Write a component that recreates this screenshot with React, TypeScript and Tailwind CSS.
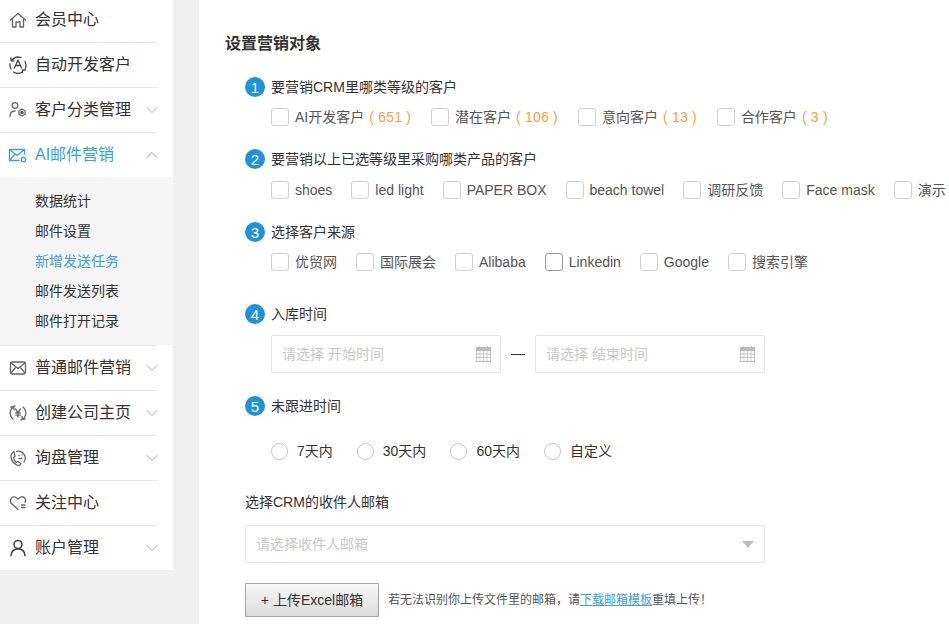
import { ChevronDown, ChevronUp } from 'lucide-react'
import type { ReactNode } from 'react'

const Ic = ({ children, color = '#666' }: { children: ReactNode; color?: string }) => (
  <svg width="20" height="20" viewBox="0 0 20 20" fill="none" stroke={color} strokeWidth="1.3" strokeLinecap="round" strokeLinejoin="round">
    {children}
  </svg>
)

const icons: Record<string, ReactNode> = {
  home: <Ic><path d="M2.5 10 10 3.5 17.5 10M4.5 9v8h3.5v-5h4v5h3.5V9" /></Ic>,
  auto: (
    <Ic color="#444">
      <path d="M3.8 5.5A8 8 0 0 1 13 2.6M17 6.5a8 8 0 0 1 .3 7M14.5 17a8 8 0 0 1-9 0M3 14a8 8 0 0 1-1-5" />
      <path d="M6.500 13 10 5l3.500 8M7.800 10.500h4.400" />
      <path d="M3 2.800v3h3M14.500 17.500V15h3" />
    </Ic>
  ),
  users: (
    <Ic>
      <circle cx="7" cy="5.500" r="2.800" />
      <path d="M2 16.500c0-3.500 2-5.500 5-5.500" />
      <path d="m14 9 3 1.700v3.500L14 16l-3-1.800v-3.500z" />
      <circle cx="14" cy="12.500" r="1.200" fill="#666" />
    </Ic>
  ),
  aiMail: (
    <Ic color="#3b9fe0">
      <path d="M16.500 9V4.500h-15v11H11" />
      <path d="m1.500 4.500 7.500 6 7.500-6M1.500 15.500l5-6" />
      <circle cx="15.500" cy="14.500" r="2.200" />
    </Ic>
  ),
  mail: (
    <Ic>
      <rect x="2.500" y="4" width="15" height="12" rx="1.500" />
      <path d="m3 5 7 5.500L17 5M3 15l5-6M17 15l-5-6" />
    </Ic>
  ),
  company: (
    <Ic>
      <path d="M7 2.800A7.800 7.800 0 0 0 5 16M13 17.200A7.800 7.800 0 0 0 15 4" />
      <path d="M2.800 4H5.500l.5 2.500M17.200 16h-2.700l-.5-2.500" />
      <path d="m7.500 6 2.500 3.500L12.500 6M10 9.500V14M7.800 10h4.400M7.800 12.200h4.400" />
    </Ic>
  ),
  inquiry: (
    <Ic>
      <path d="M6 3.500c-5 3-3.500 10.500 3 13.500 2 1 3.500.2 3.800-1.500l-3-2-1.500 1c-1.500-1-2.500-3-2.800-5l1.500-1z" />
      <path d="M8.500 3.300A7 7 0 0 1 16 14" />
      <path d="M11 7.500h.1M14 7h.1M11 10.500c1 .5 2 .3 3-.5" />
    </Ic>
  ),
  heart: (
    <Ic>
      <path d="M10 16.500 3.500 10.500C1 7.500 3 3.500 6.500 3.800 8 4 9.300 5 10 6.300 10.700 5 12 4 13.500 3.800 16.500 3.500 18.500 6.500 17 9.500" />
      <path d="M13.500 12h3.500M13.500 14.500h3.500" />
    </Ic>
  ),
  account: (
    <Ic color="#444">
      <circle cx="10" cy="6.500" r="4" strokeWidth="1.600" />
      <path d="M3 17.500c.3-4 3-6.500 7-6.500s6.700 2.500 7 6.500" strokeWidth="1.600" />
    </Ic>
  ),
}

function NavItem({ icon, label, arrow, last }: { icon: string; label: string; arrow?: boolean; last?: boolean }) {
  return (
    <div className={`mr-4 flex items-center ${last ? 'h-[44px]' : 'h-[45px] border-b border-[#e6e6e6]'}`}>
      <div className="ml-[8px] flex w-[27px] shrink-0">{icons[icon]}</div>
      <span className="flex-1 text-base text-[#333]">{label}</span>
      {arrow && <ChevronDown size={20} strokeWidth={1.2} className="-mr-[5px] text-[#aaa]" />}
    </div>
  )
}

function Step({ n, children }: { n: number; children: ReactNode }) {
  return (
    <div className="flex h-5 items-center">
      <span className="flex h-5 w-5 items-center justify-center rounded-full bg-[#1f93d9] text-[15px] leading-none text-white">{n}</span>
      <span className="ml-[6px] text-sm text-[#333]">{children}</span>
    </div>
  )
}

function Check({ label, count, dark }: { label: string; count?: number; dark?: boolean }) {
  return (
    <label className="flex shrink-0 items-center">
      <span className={`h-[18px] w-[18px] shrink-0 rounded-[3px] border ${dark ? 'border-[#999]' : 'border-[#d0d0d0]'} bg-white`} />
      <span className="ml-[6px] text-sm whitespace-nowrap text-[#555]">{label}</span>
      {count !== undefined && <span className="ml-[5px] text-sm tracking-[0.2px] whitespace-nowrap text-[#ff9f40]">( {count} )</span>}
    </label>
  )
}

function Radio({ label }: { label: string }) {
  return (
    <label className="flex items-center">
      <span className="h-[17px] w-[17px] rounded-full border border-[#c4c4c4] bg-white" />
      <span className="ml-[9px] text-sm text-[#333]">{label}</span>
    </label>
  )
}

function CalendarIcon() {
  return (
    <svg width="15" height="16" viewBox="0 0 15 16" fill="none" stroke="#bbb" strokeWidth="1">
      <path d="M3.500 0v3M11.500 0v3" />
      <rect x="0" y="1.500" width="15" height="3" fill="#bbb" />
      <rect x=".5" y="4.500" width="14" height="11" />
      <path d="M0 8h15M0 11.500h15M4 4.500v11M7.500 4.500v11M11 4.500v11" strokeWidth=".8" />
    </svg>
  )
}

function DateInput({ placeholder }: { placeholder: string }) {
  return (
    <div className="flex h-[38px] w-[230px] items-center justify-between rounded-[2px] border border-[#e6e6e6] bg-white pr-[9px] pl-[10px]">
      <span className="text-sm text-[#c8c8c8]">{placeholder}</span>
      <CalendarIcon />
    </div>
  )
}

const sub = ['数据统计', '邮件设置', '新增发送任务', '邮件发送列表', '邮件打开记录']

export default function App() {
  return (
    <div className="flex h-[624px] overflow-hidden bg-[#f0f0f0] font-['Liberation_Sans','Noto_Sans_CJK_SC',sans-serif]">
      <aside className="-mt-[2px] w-[173px] shrink-0 self-start bg-white">
        <NavItem icon="home" label="会员中心" />
        <NavItem icon="auto" label="自动开发客户" />
        <NavItem icon="users" label="客户分类管理" arrow />
        <div className="mr-4 flex h-[44px] items-center">
          <div className="ml-[8px] flex w-[27px] shrink-0">{icons.aiMail}</div>
          <span className="flex-1 text-base text-[#3b9fe0]">AI邮件营销</span>
          <ChevronUp size={20} strokeWidth={1.2} className="-mr-[5px] text-[#999]" />
        </div>
        <div className="h-[168px] bg-[#f5f5f5] pt-[9px] pl-[35px]">
          {sub.map(s => (
            <div key={s} className={`h-[30px] text-sm leading-[30px] ${s === '新增发送任务' ? 'text-[#3b9fe0]' : 'text-[#333]'}`}>{s}</div>
          ))}
        </div>
        <div className="mr-4 border-t border-[#e6e6e6]" />
        <NavItem icon="mail" label="普通邮件营销" arrow />
        <NavItem icon="company" label="创建公司主页" arrow />
        <NavItem icon="inquiry" label="询盘管理" arrow />
        <NavItem icon="heart" label="关注中心" />
        <NavItem icon="account" label="账户管理" arrow last />
      </aside>

      <main className="ml-[26px] flex-1 overflow-hidden bg-white pt-[34px] pl-[26px]">
        <h1 className="text-base leading-5 font-bold text-[#333]">设置营销对象</h1>

        <div className="mt-[23px] ml-[20px]">
          <Step n={1}>要营销CRM里哪类等级的客户</Step>
          <div className="mt-[11px] ml-[26px] flex h-[18px] items-center gap-5">
            <Check label="AI开发客户" count={651} />
            <Check label="潜在客户" count={106} />
            <Check label="意向客户" count={13} />
            <Check label="合作客户" count={3} />
          </div>

          <div className="mt-[23px]"><Step n={2}>要营销以上已选等级里采购哪类产品的客户</Step></div>
          <div className="mt-[12px] ml-[26px] flex h-[18px] items-center gap-[19px]">
            <Check label="shoes" />
            <Check label="led light" />
            <Check label="PAPER BOX" />
            <Check label="beach towel" />
            <Check label="调研反馈" />
            <Check label="Face mask" />
            <Check label="演示" />
          </div>

          <div className="mt-[23px]"><Step n={3}>选择客户来源</Step></div>
          <div className="mt-[11px] ml-[26px] flex h-[18px] items-center gap-[19px]">
            <Check label="优贸网" />
            <Check label="国际展会" />
            <Check label="Alibaba" />
            <Check label="Linkedin" dark />
            <Check label="Google" />
            <Check label="搜索引擎" />
          </div>

          <div className="mt-[33px]"><Step n={4}>入库时间</Step></div>
          <div className="mt-[11px] ml-[26px] flex items-center">
            <DateInput placeholder="请选择 开始时间" />
            <span className="mx-[10px] h-px w-[14px] bg-[#333]" />
            <DateInput placeholder="请选择 结束时间" />
          </div>

          <div className="mt-[23px]"><Step n={5}>未跟进时间</Step></div>
          <div className="mt-[27px] ml-[26px] flex h-4 items-center gap-[24px]">
            <Radio label="7天内" />
            <Radio label="30天内" />
            <Radio label="60天内" />
            <Radio label="自定义" />
          </div>

          <div className="mt-[33px] text-sm leading-5 text-[#333]">选择CRM的收件人邮箱</div>
          <div className="mt-[13px] flex h-[38px] w-[520px] items-center justify-between rounded-[2px] border border-[#e6e6e6] bg-white pr-[10px] pl-[10px]">
            <span className="text-sm text-[#c8c8c8]">请选择收件人邮箱</span>
            <span className="h-0 w-0 border-x-[6px] border-t-[7px] border-x-transparent border-t-[#bbb]" />
          </div>

          <div className="mt-[20px] flex items-center">
            <button className="h-[34px] w-[134px] border border-[#a6a6a6] bg-gradient-to-b from-[#f7f7f7] to-[#dcdcdc] text-sm text-[#333]">+ 上传Excel邮箱</button>
            <span className="ml-[9px] text-xs text-[#555]">
              若无法识别你上传文件里的邮箱，请<a className="text-[#3b9fe0] underline">下载邮箱模板</a>重填上传！
            </span>
          </div>
        </div>
      </main>
    </div>
  )
}
